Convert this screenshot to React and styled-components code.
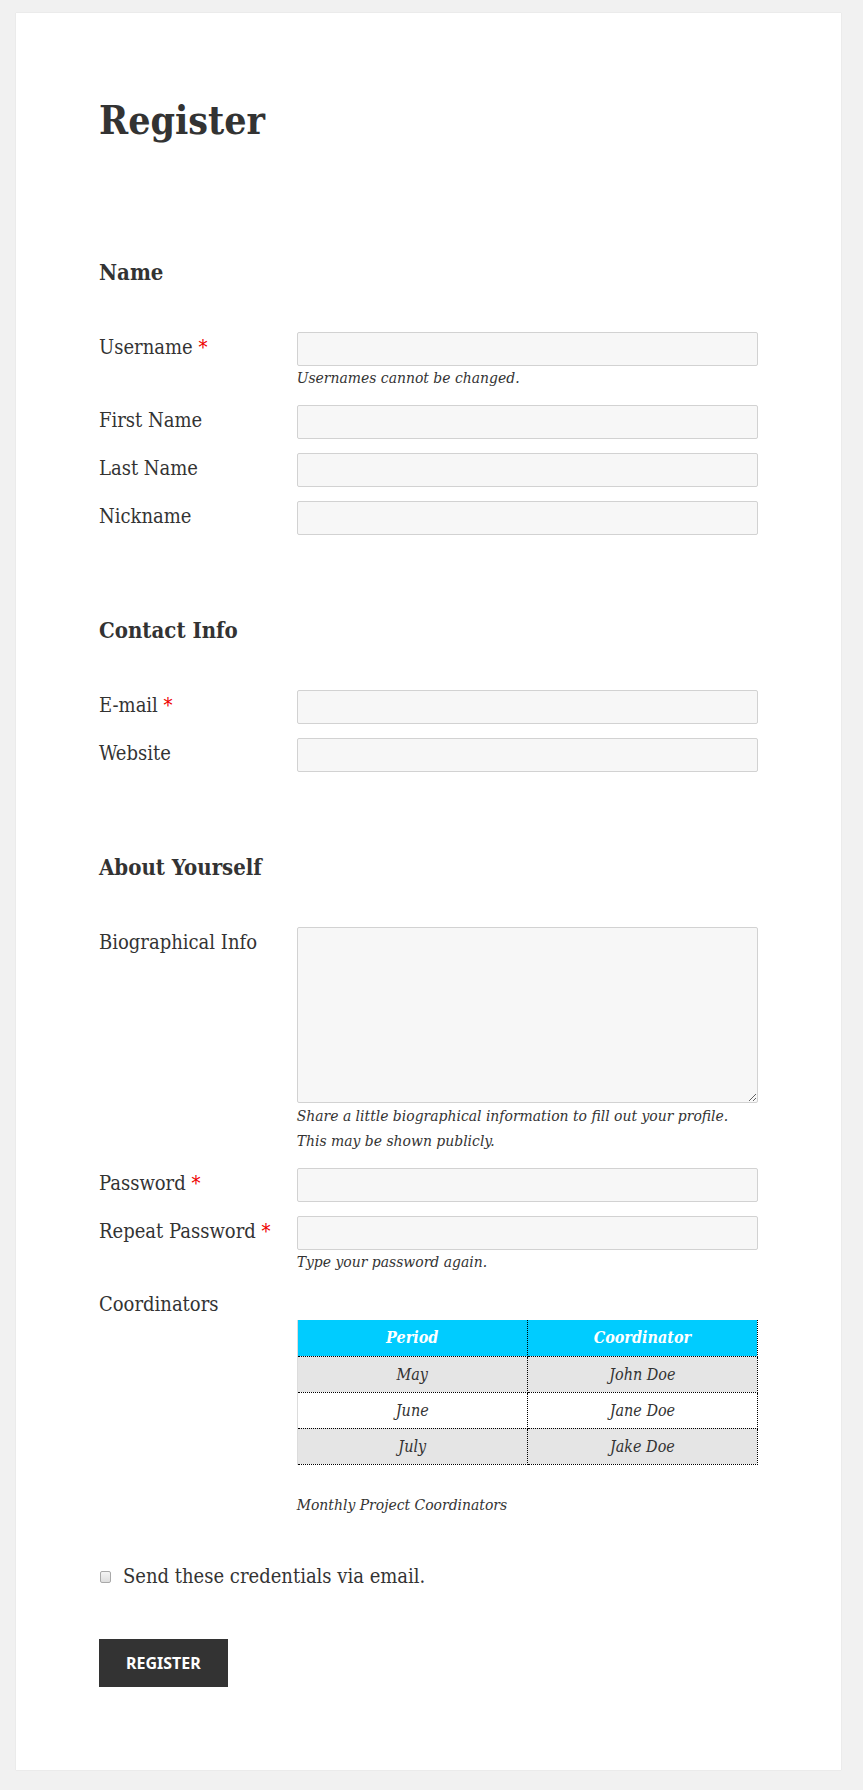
import React from 'react';
import styled, { createGlobalStyle } from 'styled-components';

const GlobalStyle = createGlobalStyle`
	html, body {
		margin: 0;
		padding: 0;
		background-color: #f1f1f1;
	}

	body {
		color: #333;
		font-family: "DejaVu Serif Condensed", "DejaVu Serif", serif;
		font-stretch: semi-condensed;
	}

	* {
		box-sizing: border-box;
	}
`;

const Page = styled.div`
	/* Display & Box Model */
	padding: 13px 22px 21px 16px;
`;

const Card = styled.article`
	/* Display & Box Model */
	padding: 83px 83px 83px 83px;

	/* Color */
	background-color: #fff;
	box-shadow: 0 0 1px rgba(0, 0, 0, 0.15);
`;

const Title = styled.h1`
	/* Display & Box Model */
	margin: 0 0 113px 0;

	/* Text */
	font-size: 39px;
	font-weight: 700;
	line-height: 48px;
`;

const SectionTitle = styled.h3`
	/* Display & Box Model */
	margin: 80px 0 45px 0;

	/* Text */
	font-size: 22px;
	font-weight: 700;
	line-height: 30px;
`;

const Row = styled.div`
	/* Display & Box Model */
	display: grid;
	grid-template-columns: 30% 70%;
	margin-bottom: 14px;
`;

const Label = styled.label`
	/* Text */
	font-size: 20px;
	line-height: 30px;
`;

const Required = styled.span`
	color: #ee0000;
`;

const Field = styled.div`
	display: flex;
	flex-direction: column;
`;

const TextInput = styled.input`
	/* Display & Box Model */
	display: block;
	width: 100%;
	height: 34px;
	padding: 0 8px;
	border: 1px solid #d2d2d2;
	border-radius: 2px;
	margin: 0;

	/* Color */
	background-color: #f7f7f7;
	color: #333;

	/* Text */
	font-family: inherit;
	font-size: 16px;
`;

const TextArea = styled.textarea`
	/* Display & Box Model */
	display: block;
	width: 100%;
	height: 176px;
	padding: 6px 8px;
	border: 1px solid #d2d2d2;
	border-radius: 2px;
	margin: 0;
	resize: vertical;

	/* Color */
	background-color: #f7f7f7;
	color: #333;

	/* Text */
	font-family: inherit;
	font-size: 16px;
`;

const Hint = styled.span`
	/* Display & Box Model */
	display: block;
	margin-top: ${props => props.$top || 0}px;

	/* Text */
	font-size: 15.5px;
	font-style: italic;
	line-height: 25px;
`;

const Table = styled.table`
	/* Display & Box Model */
	width: 100%;
	margin-top: 31px;
	border-collapse: collapse;
	border-left: 1px solid #dcdcdc;

	/* Text */
	font-size: 16px;
	font-style: italic;
	text-align: center;
`;

const HeadCell = styled.th`
	/* Display & Box Model */
	width: 50%;
	height: 36px;
	padding: 0;
	border-right: 1px dotted #000;
	border-bottom: 1px dotted #000;

	/* Color */
	background-color: #00ccff;
	color: #fff;

	/* Text */
	font-weight: 700;
`;

const BodyRow = styled.tr`
	background-color: ${props => (props.$striped ? '#e5e5e5' : '#fff')};
`;

const Cell = styled.td`
	/* Display & Box Model */
	height: 36px;
	padding: 0;
	border-right: 1px dotted #000;
	border-bottom: 1px dotted #000;
`;

const CheckRow = styled.label`
	/* Display & Box Model */
	display: flex;
	align-items: center;
	margin: 43px 0 48px 0;

	/* Text */
	font-size: 20px;
	line-height: 30px;
`;

const Checkbox = styled.input`
	/* Display & Box Model */
	appearance: none;
	width: 11px;
	height: 12px;
	border: 1px solid #a9a9a9;
	border-radius: 2px;
	margin: 2px 12px 0 1px;

	/* Color */
	background: linear-gradient(#f4f4f4, #dedede);
`;

const Button = styled.button`
	/* Display & Box Model */
	display: block;
	height: 48px;
	padding: 0 27px;
	border: 0;
	margin: 0;

	/* Color */
	background-color: #333;
	color: #fff;

	/* Text */
	font-family: "Noto Sans", sans-serif;
	font-size: 16px;
	font-weight: 700;
	text-transform: uppercase;

	/* Other */
	cursor: pointer;
`;

const coordinators = [
	{ period: 'May', name: 'John Doe' },
	{ period: 'June', name: 'Jane Doe' },
	{ period: 'July', name: 'Jake Doe' },
];

const TextRow = ({ label, required, hint }) => (
	<Row>
		<Label>
			{label}
			{required && <Required> *</Required>}
		</Label>
		<Field>
			<TextInput type="text" />
			{hint && <Hint>{hint}</Hint>}
		</Field>
	</Row>
);

const App = () => (
	<Page>
		<GlobalStyle />
		<Card>
			<Title>Register</Title>

			<SectionTitle>Name</SectionTitle>
			<TextRow label="Username" required hint="Usernames cannot be changed." />
			<TextRow label="First Name" />
			<TextRow label="Last Name" />
			<TextRow label="Nickname" />

			<SectionTitle>Contact Info</SectionTitle>
			<TextRow label="E-mail" required />
			<TextRow label="Website" />

			<SectionTitle>About Yourself</SectionTitle>
			<Row>
				<Label>Biographical Info</Label>
				<Field>
					<TextArea />
					<Hint $top={1}>
						Share a little biographical information to fill out your profile.
						<br />
						This may be shown publicly.
					</Hint>
				</Field>
			</Row>
			<TextRow label="Password" required />
			<TextRow label="Repeat Password" required hint="Type your password again." />
			<Row>
				<Label>Coordinators</Label>
				<Field>
					<Table>
						<thead>
							<tr>
								<HeadCell>Period</HeadCell>
								<HeadCell>Coordinator</HeadCell>
							</tr>
						</thead>
						<tbody>
							{coordinators.map((item, index) => (
								<BodyRow key={item.period} $striped={index % 2 === 0}>
									<Cell>{item.period}</Cell>
									<Cell>{item.name}</Cell>
								</BodyRow>
							))}
						</tbody>
					</Table>
					<Hint $top={28}>Monthly Project Coordinators</Hint>
				</Field>
			</Row>

			<CheckRow>
				<Checkbox type="checkbox" />
				Send these credentials via email.
			</CheckRow>

			<Button type="submit">Register</Button>
		</Card>
	</Page>
);

export default App;
